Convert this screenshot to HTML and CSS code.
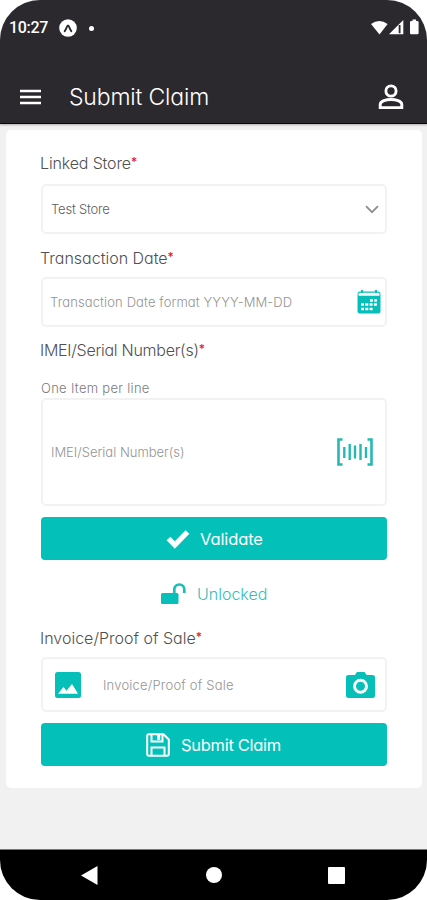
FILE: index.html
```html
<!DOCTYPE html>
<html lang="en">
<head>
<meta charset="utf-8">
<title>Submit Claim</title>
<link rel="stylesheet" href="styles.css">
</head>
<body>
<div class="phone">
  <header class="top">
    <div class="status">
      <span class="clock">10:27</span>
      <svg class="app-dot" width="18" height="18" viewBox="0 0 18 18"><circle cx="9" cy="9" r="8.8" fill="#fff"/><path d="M5.7 12.2C7.5 10 7.9 6.5 9 6.5s1.500 3.500 3.300 5.700" fill="none" stroke="#2c292e" stroke-width="1.900" stroke-linecap="round"/></svg>
      <span class="bullet"></span>
      <svg class="signals" width="50" height="18" viewBox="0 0 50 18"><path d="M0 5Q8.300-1.200 16.600 5L8.500 15.500z" fill="#fff"/><path d="M18 15.200 32.300 1v14.200z" fill="#fff"/><path d="M28.600 6v8.300" stroke="#2c292e" stroke-width="1.800"/><path d="M39 3.200q0-1.200 1.200-1.200h1.300V.6h3.600V2h1.300q1.200 0 1.200 1.200v11q0 1.100-1.200 1.100h-6.200q-1.200 0-1.200-1.100z" fill="#fff"/></svg>
    </div>
    <div class="appbar">
      <svg class="menu" width="21" height="16" viewBox="0 0 21 16"><path d="M0 1.900h21M0 8h21M0 14.100h21" stroke="#fff" stroke-width="2.500"/></svg>
      <h1><span class="title">Submit Claim</span></h1>
      <svg class="user" width="26" height="26" viewBox="0 0 26 26" fill="none" stroke="#fff" stroke-width="2.900"><circle cx="13" cy="7" r="5.100"/><path d="M2.200 23.600v-3.100c0-3.400 6.200-5 10.800-5s10.800 1.600 10.800 5v3.100z"/></svg>
    </div>
  </header>
  <main>
    <form class="card">
      <label class="label l1"><span class="t-linked">Linked Store</span><i>*</i></label>
      <div class="field select"><span class="value t-test">Test Store</span>
        <svg width="14" height="9" viewBox="0 0 14 9"><path d="M1 1.200 7 7.200l6-6" fill="none" stroke="#8d8d8d" stroke-width="1.800"/></svg></div>
      <label class="label l2"><span class="t-date">Transaction Date</span><i>*</i></label>
      <div class="field date"><span class="hint t-format">Transaction Date format YYYY-MM-DD</span>
        <svg width="24" height="24" viewBox="0 0 24 24"><path d="M2.500 1.500h19Q23.500 1.500 23.500 4v17q0 2.500-2.500 2.500H3Q.5 23.500.5 21V4q0-2.500 2-2.500z" fill="#06bfb9"/><path d="M1.500 5.700V4q0-1.300 1.300-1.300h18.400Q22.500 2.700 22.500 4v1.700z" fill="#fff"/><path d="M5 0v3M19 0v3" stroke="#06bfb9" stroke-width="2"/><path d="M13 10.500h7M4 14.500h16M4 19h12" stroke="#fff" stroke-width="2.500" stroke-dasharray="3 1.300"/></svg></div>
      <label class="label l3"><span class="t-imei">IMEI/Serial Number(s)</span><i>*</i></label>
      <div class="note"><span class="t-note">One Item per line</span></div>
      <div class="field area"><span class="hint t-serial">IMEI/Serial Number(s)</span>
        <svg width="36" height="28" viewBox="0 0 36 28" fill="none" stroke="#25b9b1"><path d="M5.500 1.500h-4v25h4M30.500 1.500h4v25h-4" stroke-width="2.600"/><path d="M7.300 9v11M12.700 6v16M18 7.500v13M23.500 6v16M29 9v11" stroke-width="2.400"/></svg></div>
      <button type="button" class="btn validate">
        <svg width="24" height="20" viewBox="0 0 24 20"><path d="M2.500 9.500 8.800 16 21.500 3" fill="none" stroke="#fff" stroke-width="5.300"/></svg>
        <span class="t-validate">Validate</span></button>
      <div class="unlocked">
        <svg width="25" height="21" viewBox="0 0 25 21"><rect x="0" y="10" width="17.500" height="11" rx="1.500" fill="#06bfb9"/><path d="M13.300 11V6.500a5 5 0 0 1 10 0V10" fill="none" stroke="#1bbdb6" stroke-width="2.700"/></svg>
        <span class="t-unlocked">Unlocked</span></div>
      <label class="label l4"><span class="t-invoice">Invoice/Proof of Sale</span><i>*</i></label>
      <div class="field upload">
        <svg width="26" height="26" viewBox="0 0 26 26"><rect width="26" height="26" rx="2.500" fill="#06bfb9"/><path d="M3 21.800 8.500 15l3 3.700L17 12l6 9.800z" fill="#fff"/></svg>
        <span class="hint t-proof">Invoice/Proof of Sale</span>
        <svg class="camera" width="29" height="26" viewBox="0 0 29 26"><path d="M2.500 3h6.300L11 0h7.500l2.200 3h5.800Q29 3 29 5.500v18q0 2.500-2.500 2.500h-24Q0 26 0 23.500v-18Q0 3 2.500 3z" fill="#06bfb9"/><circle cx="14.500" cy="14.300" r="6" fill="none" stroke="#fff" stroke-width="3"/></svg></div>
      <button type="button" class="btn submit">
        <svg width="24" height="24" viewBox="0 0 24 24" fill="none" stroke="#fff" stroke-width="2"><path d="M3 1.200h14.500l5.300 5.300V21q0 1.800-1.800 1.800H3Q1.200 22.800 1.200 21V3Q1.200 1.200 3 1.200z"/><path d="M5.500 1.500v7h11v-7M5.500 22.500v-8h13v8"/><path d="M12.700 2v5" stroke-width="3"/></svg>
        <span class="t-submit">Submit Claim</span></button>
    </form>
  </main>
  <nav class="nav">
    <svg width="17" height="19" viewBox="0 0 17 19"><path d="M0 9.500 16.500 0v19z" fill="#fff"/></svg>
    <svg class="home" width="16" height="16" viewBox="0 0 16 16"><circle cx="8" cy="8" r="8" fill="#fff"/></svg>
    <svg width="17" height="17" viewBox="0 0 17 17"><rect width="17" height="17" rx="1" fill="#fff"/></svg>
  </nav>
</div>
</body>
</html>
```
FILE: styles.css
```css
* { box-sizing: border-box; }
body { margin: 0; background: #fff; }
.phone {
  width: 427px; height: 900px; overflow: hidden;
  display: flex; flex-direction: column;
  border-radius: 40px; background: #f1f1f1;
  font-family: Inter, "Liberation Sans", sans-serif; font-weight: 300;
  font-feature-settings: "cv11";
}
svg { display: block; flex: none; }
span { white-space: nowrap; }
.top { height: 124px; background: #2c292e; border-bottom: 1px solid #09080a; box-shadow: 0 1px 2px #aaa; flex: none; }
.status { height: 56px; display: flex; align-items: center; padding: 0 7px 0 9px; }
.clock { font: 500 16px/20px Roboto, sans-serif; letter-spacing: -.3px; color: #fff; width: 50px; }
.bullet { width: 5px; height: 5px; border-radius: 50%; background: #fff; margin-left: 12px; }
.signals { margin-left: auto; position: relative; left: 1px; }
.appbar { height: 67px; display: flex; align-items: center; padding: 14px 23px 0 20px; }
h1 { margin: 0 0 0 28px; font-size: 23px; line-height: 30px; font-weight: 300; letter-spacing: -.17px; color: #fff; }
.user { margin-left: auto; }
main { flex: 1; padding: 6px 5px 0 6px; }
.card { height: 658px; background: #fff; border-radius: 5px; padding: 23px 35px 0; display: flex; flex-direction: column; }
.label { display: flex; height: 20px; line-height: 20px; font-size: 16px; color: #505050; margin-left: -1px; }
.label i { font-style: normal; font-weight: 500; font-size: 12px; line-height: 17px; color: #e02029; }
.field { display: flex; align-items: center; justify-content: space-between; border: 2px solid #f2f2f2; border-radius: 5px; flex: none; }
.value, .hint { font-size: 13px; line-height: 18px; }
.value { color: #606060; }
.hint { color: #949494; }
.t-linked { letter-spacing: -.15px; }
.t-test { letter-spacing: -.2px; }
.t-format { letter-spacing: .12px; }
.t-imei { letter-spacing: -.27px; }
.t-note { letter-spacing: .3px; }
.select { height: 50px; margin-top: 11px; padding: 0 6px 0 8px; }
.l2 { margin-top: 14px; }
.date { height: 50px; margin-top: 9px; padding: 0 4px 0 7px; }
.l3 { margin-top: 13px; }
.note { margin-top: 19px; height: 19px; line-height: 18px; font-size: 13px; color: #7b7b7b; }
.area { height: 108px; padding: 0 12px 0 8px; }
.btn { border: 0; border-radius: 4px; background: #03c1b9; color: #fff; display: flex; align-items: center; padding: 0; font: inherit; font-size: 16.5px; font-weight: 400; flex: none; }
.validate { height: 43px; margin-top: 11px; padding-left: 125px; gap: 10px; letter-spacing: -.12px; }
.unlocked { height: 21px; margin-top: 23px; padding-left: 120px; gap: 11px; display: flex; align-items: center; font-size: 16px; color: #35bdb6; }
.l4 { margin-top: 24px; }
.upload { height: 55px; margin-top: 9px; padding: 0 10px 0 12px; }
.t-proof { margin-left: 22px; letter-spacing: .2px; }
.camera { margin-left: auto; }
.submit { height: 43px; margin-top: 11px; padding-left: 105px; gap: 11px; letter-spacing: -.3px; }
.nav { height: 51px; background: #000; border-top: 1px solid #777; display: flex; align-items: center; justify-content: space-between; padding: 0 82px 0 81px; flex: none; }
.home { margin-left: 2px; }
```
